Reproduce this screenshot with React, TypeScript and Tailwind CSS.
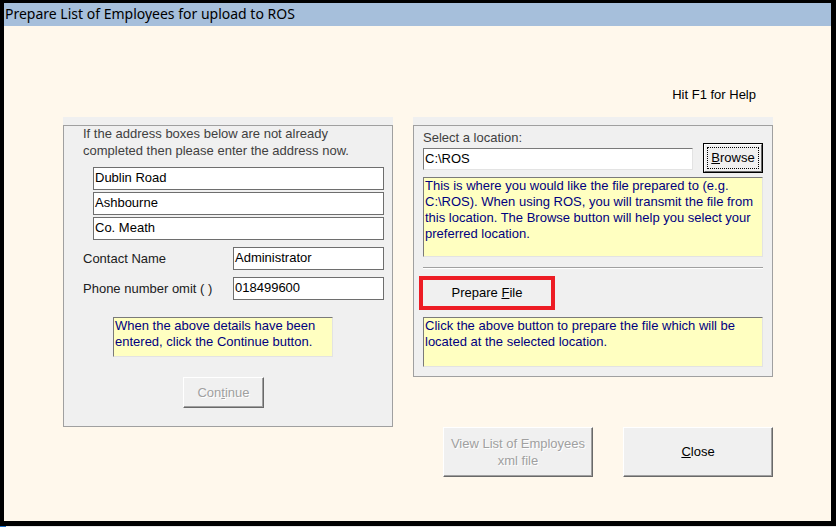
const sunken = "border border-t-[#7a7a7a] border-l-[#7a7a7a] border-b-[#e3e3e3] border-r-[#e3e3e3]";
const raised = "border border-t-white border-l-white border-b-[#696969] border-r-[#696969] shadow-[inset_-1px_-1px_0_#a0a0a0]";
const dimText = "text-[#a0a0a0] [text-shadow:1px_1px_0_#ffffff]";

function Field({ value, className }: { value: string; className: string }) {
  return (
    <div className={`h-[23px] bg-white border border-[#6e6e6e] pl-[1px] leading-[20px] text-black ${className}`}>
      {value}
    </div>
  );
}

function Note({ className, children }: { className: string; children: React.ReactNode }) {
  return (
    <div className={`bg-[#ffffc1] ${sunken} pl-[1px] leading-[16px] text-[#000080] ${className}`}>
      {children}
    </div>
  );
}

export default function App() {
  return (
    <div className="w-[836px] h-[527px] bg-black flex flex-col pt-[3px] font-['Liberation_Sans',Arial,sans-serif] text-[13px]">
      <div className="flex-1 flex flex-col ml-[4px] mr-[5px]">
        <div className="h-[23px] bg-[#a6bfdb] pl-[1px] leading-[22px] text-[14px] text-black font-['Noto_Sans',sans-serif]">
          Prepare List of Employees for upload to ROS
        </div>

        <div className="flex-1 bg-[#fff8ec] flex flex-col">
          <div className="h-[91px] pt-[61px] pr-[75px] flex justify-end leading-[16px] text-black">Hit F1 for Help</div>

          <div className="flex gap-[20px] pl-[59px]">
            {/* left panel */}
            <div className="w-[330px] h-[310px] bg-[#f0f0f0] pt-[8px] flex flex-col">
              <div className="flex-1 border border-[#a0a0a0] flex flex-col">
                <div className="pl-[19px] leading-[17px] text-[#404040] -mt-[1px]">
                  <div>If the address boxes below are not already</div>
                  <div>completed then please enter the address now.</div>
                </div>
                <div className="mt-[8px] ml-[29px] w-[291px] flex flex-col gap-[2px]">
                  <Field value="Dublin Road" className="w-full" />
                  <Field value="Ashbourne" className="w-full" />
                  <Field value="Co. Meath" className="w-full" />
                </div>
                <div className="mt-[7px] flex items-center pl-[19px]">
                  <div className="w-[150px] text-[#202020]">Contact Name</div>
                  <Field value="Administrator" className="w-[151px]" />
                </div>
                <div className="mt-[7px] flex items-center pl-[19px]">
                  <div className="w-[150px] text-[#202020]">Phone number omit ( )</div>
                  <Field value="018499600" className="w-[151px]" />
                </div>
                <Note className="mt-[17px] ml-[49px] w-[220px] h-[40px]">
                  <div>When the above details have been</div>
                  <div>entered, click the Continue button.</div>
                </Note>
                <div className={`mt-[20px] ml-[119px] w-[81px] h-[31px] bg-[#f0f0f0] ${raised} flex items-center justify-center ${dimText}`}>
                  <span>
                    Con<span className="underline">t</span>inue
                  </span>
                </div>
              </div>
            </div>

            {/* right column */}
            <div className="w-[360px] flex flex-col">
              <div className="h-[260px] bg-[#f0f0f0] pt-[8px] flex flex-col">
                <div className="flex-1 border border-[#a0a0a0] flex flex-col px-[9px]">
                  <div className="flex items-start">
                    <div className="flex flex-col">
                      <div className="mt-[4px] leading-[16px] text-[#404040]">Select a location:</div>
                      <div className={`mt-[2px] w-[270px] h-[22px] bg-white ${sunken} pl-[1px] leading-[19px] text-black`}>C:\ROS</div>
                    </div>
                    <div className="mt-[17px] ml-[10px] w-[60px] h-[30px] border border-black">
                      <div className="w-full h-full bg-[#f0f0f0] border border-t-white border-l-white border-b-[#696969] border-r-[#696969] p-[2px]">
                        <div className="w-full h-full border border-dotted border-black flex items-center justify-center text-black">
                          <span>
                            <span className="underline">B</span>rowse
                          </span>
                        </div>
                      </div>
                    </div>
                  </div>
                  <Note className="mt-[4px] h-[80px]">
                    <div>This is where you would like the file prepared to (e.g.</div>
                    <div>C:\ROS). When using ROS, you will transmit the file from</div>
                    <div>this location. The Browse button will help you select your</div>
                    <div>preferred location.</div>
                  </Note>
                  <div className="mt-[10px] border-t border-t-[#a0a0a0] border-b border-b-white" />
                  <div className="mt-[7px] -ml-[4px] w-[136px] h-[34px] border-4 border-[#ed1c24] bg-[#f0f0f0] flex items-center justify-center text-black">
                    <span>
                      Prepare <span className="underline">F</span>ile
                    </span>
                  </div>
                  <Note className="mt-[7px] h-[50px]">
                    <div>Click the above button to prepare the file which will be</div>
                    <div>located at the selected location.</div>
                  </Note>
                </div>
              </div>

              <div className="mt-[50px] pl-[30px] flex gap-[30px]">
                <div className={`w-[150px] h-[50px] bg-[#f0f0f0] ${raised} flex flex-col items-center justify-center leading-[17px] ${dimText}`}>
                  <div>View List of Employees</div>
                  <div>xml file</div>
                </div>
                <div className={`w-[150px] h-[50px] bg-[#f0f0f0] ${raised} flex items-center justify-center text-black`}>
                  <span>
                    <span className="underline">C</span>lose
                  </span>
                </div>
              </div>
            </div>
          </div>
        </div>
      </div>
      <div className="h-[5px]" />
      <div className="h-[1px] flex">
        <div className="w-[6px] bg-[#1c6dc4]" />
        <div className="flex-1 bg-[#e8e8e8]" />
      </div>
    </div>
  );
}
